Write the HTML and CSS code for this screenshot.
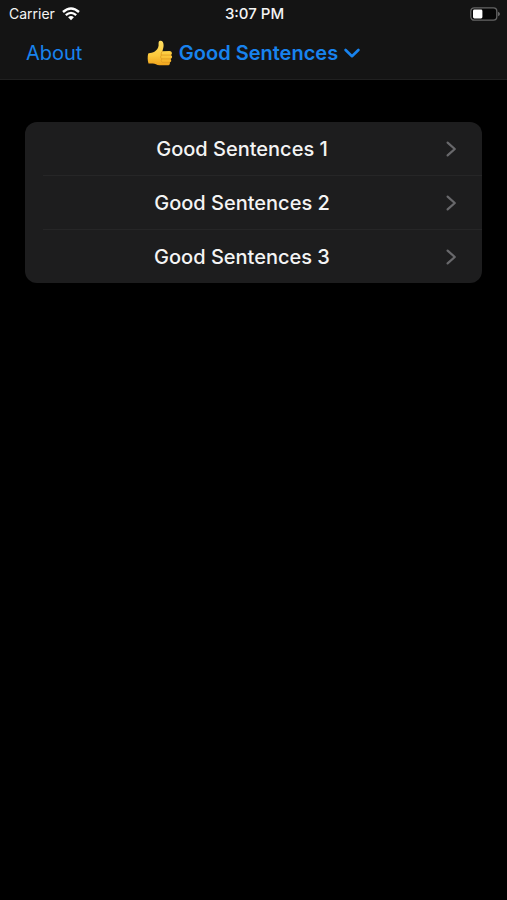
FILE: index.html
```html
<!DOCTYPE html>
<html lang="en">
<head>
<meta charset="utf-8">
<meta name="viewport" content="width=device-width, initial-scale=1">
<title>Good Sentences</title>
<link rel="stylesheet" href="styles.css">
</head>
<body>
<header class="top">
  <div class="status">
    <div class="carrier">
      <span>Carrier</span>
      <svg class="wifi" viewBox="0 0 18 14" aria-hidden="true">
        <path d="M1 5Q9-2.2 17 5" fill="none" stroke="#fff" stroke-width="2.4"/>
        <path d="M3.8 8.2Q9 3.5 14.2 8.2" fill="none" stroke="#fff" stroke-width="2.3"/>
        <path d="M6.1 10.2Q9 8 11.9 10.2L9 13.2Z" fill="#fff"/>
      </svg>
    </div>
    <time class="clock">3:07 PM</time>
    <svg class="battery" viewBox="0 0 30 14" aria-hidden="true">
      <rect x="0.8" y="0.8" width="26" height="12.4" rx="3.4" fill="#070707" stroke="#666" stroke-width="1.3"/>
      <rect x="3" y="2.6" width="9.4" height="8.8" rx="1.4" fill="#fff"/>
      <path d="M28 4.7Q30 5.6 30 7T28 9.3Z" fill="#666"/>
    </svg>
  </div>
  <nav class="bar">
    <a class="about" href="#about">About</a>
    <button class="title" type="button">
      <svg class="thumb" viewBox="0 0 26 26" aria-hidden="true">
        <defs>
          <linearGradient id="skin" x1="0" y1="0" x2="0" y2="1">
            <stop offset="0" stop-color="#ffdf62"/>
            <stop offset="0.6" stop-color="#fdc93c"/>
            <stop offset="1" stop-color="#efa31c"/>
          </linearGradient>
        </defs>
        <path d="M1.2 13.4C3.8 12.8 5.8 12.7 7.8 11.4C9.8 9.8 11.4 8 11.6 5.4C11.6 3.2 11.2 1.2 13 .8C15.4.3 16.6 2.6 16.6 5.2C16.6 7.6 15.8 9.5 15.4 11.2L22.4 11.1C25.4 11.2 25.6 14.4 23.8 15.1C25.8 16.2 25.3 18.5 23.5 18.9C24.9 20.1 24.2 22.2 22.6 22.4C23.6 24 22.2 25.3 20.4 25.3L12.5 25.2C9.5 25 8.2 23.7 5.8 23.5L1.5 23.4C.5 20.4.4 16.4 1.2 13.4Z" fill="url(#skin)"/>
        <path d="M15.4 11.2Q13.5 13 14.2 15.1H23.8M14.2 15.1Q12.6 17.2 14.5 18.9H23.5M14.5 18.9Q13.3 21.1 15.2 22.4H22.6" fill="none" stroke="#e09a22" stroke-width="0.8" stroke-linecap="round"/>
      </svg>
      <span>Good Sentences</span>
      <svg class="down" viewBox="0 0 16 10" aria-hidden="true">
        <path d="M1.6 2L8 8.2L14.4 2" fill="none" stroke="currentColor" stroke-width="2.6" stroke-linecap="round" stroke-linejoin="round"/>
      </svg>
    </button>
  </nav>
</header>
<main class="content">
  <ul class="list">
    <li><a class="row" href="#1"><span class="label">Good Sentences 1</span><svg class="next" viewBox="0 0 12 18" aria-hidden="true"><path d="M2.6 2.6L9.8 9L2.6 15.4"/></svg></a></li>
    <li><a class="row" href="#2"><span class="label">Good Sentences 2</span><svg class="next" viewBox="0 0 12 18" aria-hidden="true"><path d="M2.6 2.6L9.8 9L2.6 15.4"/></svg></a></li>
    <li><a class="row" href="#3"><span class="label">Good Sentences 3</span><svg class="next" viewBox="0 0 12 18" aria-hidden="true"><path d="M2.6 2.6L9.8 9L2.6 15.4"/></svg></a></li>
  </ul>
</main>
</body>
</html>
```
FILE: styles.css
```css
* {
  box-sizing: border-box;
}

body {
  margin: 0;
  min-height: 100vh;
  background: #000;
  color: #f4f4f4;
  font-family: Inter, "Liberation Sans", sans-serif;
}

a {
  color: inherit;
  text-decoration: none;
}

svg {
  display: block;
  flex: none;
}

.top {
  background: #141414;
  border-bottom: 1px solid #202020;
}

.status {
  display: grid;
  grid-template-columns: 1fr auto 1fr;
  align-items: center;
  height: 27px;
  padding: 0 7px 0 9px;
  font-size: 14px;
}

.carrier {
  display: flex;
  align-items: center;
  gap: 7px;
}

.wifi {
  width: 18px;
  height: 14px;
}

.clock {
  font-size: 15px;
  font-weight: 500;
}

.battery {
  width: 30px;
  height: 14px;
  justify-self: end;
}

.bar {
  display: grid;
  grid-template-columns: 1fr auto 1fr;
  align-items: center;
  height: 52px;
  padding: 0 26px;
  color: #1883ee;
  font-size: 20px;
}

.title {
  display: flex;
  align-items: center;
  gap: 6px;
  padding: 0;
  border: 0;
  background: none;
  color: inherit;
  font: inherit;
  font-weight: 600;
}

.thumb {
  width: 26px;
  height: 26px;
}

.down {
  width: 16px;
  height: 10px;
}

.content {
  padding: 42px 25px;
}

.list {
  margin: 0;
  padding: 0;
  list-style: none;
  border-radius: 12px;
  background: #1d1d1e;
}

.row {
  display: flex;
  align-items: center;
  gap: 4px;
  height: 53px;
  margin-left: 18px;
  padding-right: 25px;
}

li + li .row {
  height: 54px;
  border-top: 1px solid #262627;
}

.label {
  flex: 1;
  text-align: center;
  font-size: 20px;
  font-weight: 500;
}

.next {
  width: 12px;
  height: 18px;
  fill: none;
  stroke: #68686b;
  stroke-width: 2.2;
  stroke-linecap: round;
  stroke-linejoin: round;
}
```
